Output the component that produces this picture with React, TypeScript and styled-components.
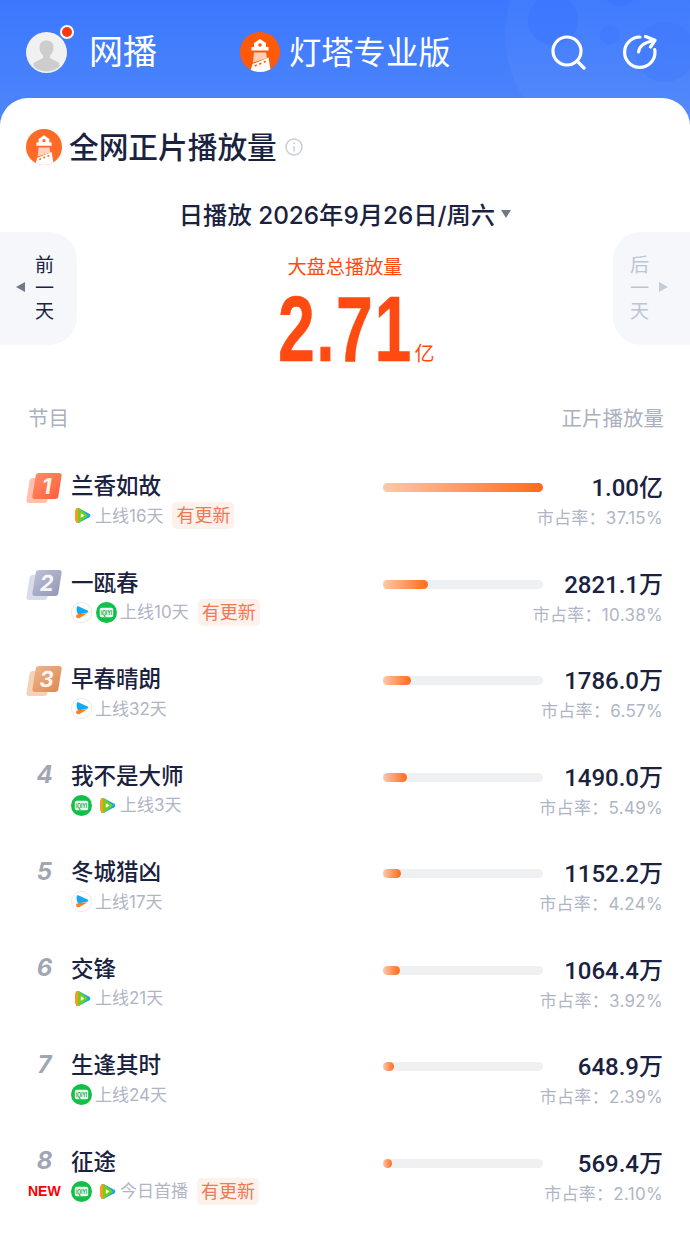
import React from "react";
import styled, { createGlobalStyle } from "styled-components";

type Source = "tencent" | "youku" | "iqiyi";

interface ShowRow {
  title: string;
  sources: Source[];
  online: string;
  updated?: boolean;
  isNew?: boolean;
  bar: number;
  amount: string;
  share: string;
}

const rows: ShowRow[] = [
  { title: "兰香如故", sources: ["tencent"], online: "上线16天", updated: true, bar: 160, amount: "1.00亿", share: "37.15%" },
  { title: "一瓯春", sources: ["youku", "iqiyi"], online: "上线10天", updated: true, bar: 45, amount: "2821.1万", share: "10.38%" },
  { title: "早春晴朗", sources: ["youku"], online: "上线32天", bar: 28, amount: "1786.0万", share: "6.57%" },
  { title: "我不是大师", sources: ["iqiyi", "tencent"], online: "上线3天", bar: 24, amount: "1490.0万", share: "5.49%" },
  { title: "冬城猎凶", sources: ["youku"], online: "上线17天", bar: 18, amount: "1152.2万", share: "4.24%" },
  { title: "交锋", sources: ["tencent"], online: "上线21天", bar: 17, amount: "1064.4万", share: "3.92%" },
  { title: "生逢其时", sources: ["iqiyi"], online: "上线24天", bar: 11, amount: "648.9万", share: "2.39%" },
  { title: "征途", sources: ["iqiyi", "tencent"], online: "今日首播", updated: true, isNew: true, bar: 9, amount: "569.4万", share: "2.10%" },
];

const medals = [
  { back: "#ffc0ad", front: "linear-gradient(135deg, #ff8d66, #ff5f3c)" },
  { back: "#d9dcea", front: "linear-gradient(135deg, #bcc0d6, #9398b8)" },
  { back: "#f3d2b8", front: "linear-gradient(135deg, #eeb388, #dd8a55)" },
];

const LighthouseLogo = ({ size, bg }: { size: number; bg: string }) => (
  <svg width={size} height={size} viewBox="0 0 40 40" style={{ flexShrink: 0 }}>
    <defs>
      <clipPath id={`lh${size}`}>
        <circle cx="20" cy="20" r="20" />
      </clipPath>
    </defs>
    <circle cx="20" cy="20" r="20" fill={bg} />
    <g clipPath={`url(#lh${size})`} fill="#fff">
      <path d="M20 7l6 4v4h2.500v3.500h-17V15H14v-4z" />
      <circle cx="20" cy="13" r="1.800" fill={bg} />
      <path d="M14 20.500h12l1 5.500-14 4.500z" opacity=".7" />
      <path d="M12.500 32l16-6.500 2.500 15H10z" />
      <path d="M14.500 33l2-.8.5 1.700-2 .8zM19 31.200l2-.8.5 1.700-2 .8zM23.500 29.400l2-.8.5 1.700-2 .8z" fill={bg} />
    </g>
  </svg>
);

const TencentIcon = () => (
  <svg width="21" height="21" viewBox="0 0 21 21">
    <path d="M5 5c0-2 1.500-2.500 3-1.700l10.300 5.500c1.400.8 1.400 2.600 0 3.400L8 17.700C6.500 18.500 5 18 5 16z" fill="#14a6f2" />
    <path d="M5 5c0-2 1.500-2.500 3-1.700l7.800 6c1 .8 1 1.600 0 2.400L8 17.700C6.500 18.500 5 18 5 16z" fill="#6fcf1c" />
    <path d="M7.500 3.100C5.500 3.300 4 4.500 4 6.500v8c0 2 1.500 3.200 3.500 3.400-.8-4.800-.8-10 0-14.800z" fill="#ff9a1f" />
    <path d="M9.800 8.200l3.700 2.300-3.700 2.300z" fill="#fff" />
  </svg>
);

const YoukuIcon = () => (
  <svg width="21" height="21" viewBox="0 0 21 21">
    <circle cx="10.500" cy="10.500" r="10.100" fill="#fff" stroke="#dfe3e6" strokeWidth=".8" />
    <path d="M6 4.500c.5-.4 1.200-.3 1.800 0l8.800 4c1 .5 1 1.400.1 1.900L7.500 12.400C5.800 11 5 7 6 4.500z" fill="#18a7f2" />
    <path d="M16.700 11.200l-8.200 4.700c-1.600.8-3.400 0-3.400-1.500 0-1.600 1.400-2.300 3-2.400z" fill="#ff7d1e" />
  </svg>
);

const IqiyiIcon = () => (
  <svg width="21" height="21" viewBox="0 0 21 21">
    <circle cx="10.500" cy="10.500" r="10.500" fill="#10c048" />
    <rect x="3.800" y="5.800" width="13.400" height="9.400" rx="1.800" fill="#e9fbef" />
    <text x="10.500" y="13" textAnchor="middle" fontFamily="Liberation Sans, sans-serif" fontWeight="700" fontSize="6.500" textLength="11" lengthAdjust="spacingAndGlyphs" fill="#10a53f">
      iQIYI
    </text>
  </svg>
);

const sourceIcons: Record<Source, React.ReactNode> = {
  tencent: <TencentIcon />,
  youku: <YoukuIcon />,
  iqiyi: <IqiyiIcon />,
};

export default function App() {
  return (
    <Page>
      <GlobalStyle />
      <Header>
        <Bubble $size={230} $top={-80} $right={-45} $fill="rgba(255, 255, 255, 0.035)" />
        <Bubble $size={50} $top={-5} $right={112} $fill="rgba(52, 112, 255, 0.4)" />
        <Bubble $size={36} $top={-30} $right={52} $fill="rgba(52, 112, 255, 0.4)" />
        <Bubble $size={20} $top={25} $right={70} $fill="rgba(52, 112, 255, 0.2)" />
        <Bubble $size={60} $top={22} $right={-5} $fill="rgba(52, 112, 255, 0.2)" />
        <UserGroup>
          <Avatar>
            <svg width="41" height="41" viewBox="0 0 41 41">
              <defs>
                <clipPath id="avatarClip">
                  <circle cx="20.500" cy="20.500" r="19" />
                </clipPath>
              </defs>
              <circle cx="20.500" cy="20.500" r="20.500" fill="#f1f1f1" />
              <g clipPath="url(#avatarClip)" fill="#cdcdcd">
                <path d="M20.500 8.500c4.500 0 7 2.500 7 7 0 3.500-1.500 6.500-3.500 8v2.500l9.500 5v9H7.500v-9l9.500-5v-2.500c-2-1.500-3.500-4.500-3.500-8 0-4.500 2.500-7 7-7z" />
              </g>
            </svg>
            <RedDot />
          </Avatar>
          <Channel>网播</Channel>
        </UserGroup>
        <BrandGroup>
          <LighthouseLogo size={40} bg="#ff5a0a" />
          <Brand>灯塔专业版</Brand>
        </BrandGroup>
        <Actions>
          <svg width="35" height="35" viewBox="0 0 35 35" fill="none" stroke="#fff" strokeWidth="3.200" strokeLinecap="round">
            <circle cx="16" cy="16" r="14" />
            <path d="M26.500 26.500l6.500 6.500" />
          </svg>
          <svg width="35" height="35" viewBox="0 0 35 35" fill="none" stroke="#fff" strokeWidth="3.200" strokeLinecap="round" strokeLinejoin="round">
            <path d="M17 2A15.200 15.200 0 1 0 32 17.500c0-1-.1-2-.3-3" />
            <path d="M15.500 17c.8-5 5-9.500 14-11" />
            <path d="M22.500 1.500l9.500 3.800-4.500 6.700" />
          </svg>
        </Actions>
      </Header>

      <Card>
        <TitleRow>
          <LighthouseLogo size={36} bg="#ff6a26" />
          <PageTitle>全网正片播放量</PageTitle>
          <svg width="18" height="18" viewBox="0 0 18 18" fill="none" stroke="#c6cfdb" strokeWidth="1.500">
            <circle cx="9" cy="9" r="8" />
            <path d="M9 8v5.500M9 4.500v1.500" />
          </svg>
        </TitleRow>

        <DateRow>
          日播放 2026年9月26日/周六
          <DateCaret />
        </DateRow>

        <Hero>
          <DayButton $side="left">
            <Caret $side="left" />
            <DayLabel>
              <span>前</span>
              <span>一</span>
              <span>天</span>
            </DayLabel>
          </DayButton>
          <Total>
            <TotalLabel>大盘总播放量</TotalLabel>
            <TotalValue>
              <BigNumber>2.71</BigNumber>
              <BigUnit>亿</BigUnit>
            </TotalValue>
          </Total>
          <DayButton $side="right" $disabled>
            <DayLabel>
              <span>后</span>
              <span>一</span>
              <span>天</span>
            </DayLabel>
            <Caret $side="right" />
          </DayButton>
        </Hero>

        <ColumnHead>
          <span>节目</span>
          <span>正片播放量</span>
        </ColumnHead>

        <List>
          {rows.map((row, i) => (
            <Row key={row.title}>
              <Rank>
                {i < 3 ? (
                  <Medal>
                    <MedalBack style={{ background: medals[i].back }} />
                    <MedalFront style={{ background: medals[i].front }}>
                      <MedalNum>{i + 1}</MedalNum>
                    </MedalFront>
                  </Medal>
                ) : (
                  <PlainRank>{i + 1}</PlainRank>
                )}
              </Rank>
              <Info>
                <ShowTitle>{row.title}</ShowTitle>
                <Meta>
                  {row.isNew && <NewMark>NEW</NewMark>}
                  <Sources>
                    {row.sources.map((s) => (
                      <SourceIcon key={s}>{sourceIcons[s]}</SourceIcon>
                    ))}
                  </Sources>
                  <Online>{row.online}</Online>
                  {row.updated && <UpdateTag>有更新</UpdateTag>}
                </Meta>
              </Info>
              <Track>
                <Fill style={{ width: row.bar }} />
              </Track>
              <Stats>
                <Amount>{row.amount}</Amount>
                <Share>
                  市占率：<ShareValue>{row.share}</ShareValue>
                </Share>
              </Stats>
            </Row>
          ))}
        </List>
      </Card>
    </Page>
  );
}

const GlobalStyle = createGlobalStyle`
  html, body {
    margin: 0;
    padding: 0;
    background: #fff;
  }
  * {
    box-sizing: border-box;
  }
  body {
    font-family: Inter, "Noto Sans CJK SC", sans-serif;
  }
`;

const Page = styled.div`
  width: 690px;
  height: 1235px;
  overflow: hidden;
  background: #fff;
`;

const Header = styled.header`
  position: relative;
  height: 128px;
  padding: 0 32px 24px 26px;
  display: grid;
  grid-template-columns: 214px 1fr auto;
  align-items: center;
  overflow: hidden;
  background: linear-gradient(180deg, #3b78ff 0%, #4f86f8 100%);
`;

const Bubble = styled.div<{ $size: number; $top: number; $right: number; $fill: string }>`
  position: absolute;
  top: ${({ $top }) => $top}px;
  right: ${({ $right }) => $right}px;
  width: ${({ $size }) => $size}px;
  height: ${({ $size }) => $size}px;
  border-radius: 50%;
  background: ${({ $fill }) => $fill};
`;

const UserGroup = styled.div`
  position: relative;
  display: flex;
  align-items: center;
  gap: 22px;
`;

const Avatar = styled.div`
  position: relative;
  width: 41px;
  height: 41px;
  display: flex;
`;

const RedDot = styled.span`
  position: absolute;
  top: -7px;
  right: -7px;
  width: 14px;
  height: 14px;
  border-radius: 50%;
  background: #fa3a0c;
  border: 2.500px solid #fff;
`;

const Channel = styled.div`
  margin-bottom: 5px;
  font-family: "Noto Sans CJK SC", sans-serif;
  font-size: 34px;
  line-height: 44px;
  color: #fff;
`;

const BrandGroup = styled.div`
  position: relative;
  display: flex;
  align-items: center;
  gap: 9px;
`;

const Brand = styled.div`
  margin-bottom: 5px;
  font-family: "Noto Sans CJK SC", sans-serif;
  font-size: 32.300px;
  line-height: 42px;
  color: #fff;
`;

const Actions = styled.div`
  position: relative;
  display: flex;
  gap: 37px;
`;

const Card = styled.main`
  position: relative;
  margin-top: -30px;
  height: 1137px;
  padding-top: 29px;
  background: #fff;
  border-radius: 28px 28px 0 0;
`;

const TitleRow = styled.div`
  display: flex;
  align-items: center;
  padding-left: 26px;
  height: 40px;
`;

const PageTitle = styled.h1`
  margin: 0 8px 2px 7px;
  font-family: "Noto Sans CJK SC", sans-serif;
  font-size: 29.700px;
  line-height: 40px;
  font-weight: 500;
  color: #1a2240;
`;

const DateRow = styled.div`
  margin-top: 28px;
  display: flex;
  align-items: center;
  justify-content: center;
  height: 36px;
  font-size: 24.300px;
  font-weight: 500;
  color: #1a2240;
`;

const DateCaret = styled.span`
  margin: 2px 0 0 6px;
  border-left: 5px solid transparent;
  border-right: 5px solid transparent;
  border-top: 8px solid #6e7a8c;
`;

const Hero = styled.section`
  margin-top: 1px;
  display: flex;
  justify-content: space-between;
  align-items: flex-start;
  height: 170px;
`;

const DayButton = styled.div<{ $side: "left" | "right"; $disabled?: boolean }>`
  width: 77px;
  height: 113px;
  display: flex;
  align-items: center;
  gap: 10px;
  background: #f5f7fa;
  color: ${({ $disabled }) => ($disabled ? "#bcc4d2" : "#1a2240")};
  padding: 0 0 4px ${({ $side }) => ($side === "left" ? "16px" : "17px")};
  border-radius: ${({ $side }) => ($side === "left" ? "0 28px 28px 0" : "28px 0 0 28px")};
`;

const Caret = styled.span<{ $side: "left" | "right" }>`
  border-top: 5px solid transparent;
  border-bottom: 5px solid transparent;
  ${({ $side }) =>
    $side === "left"
      ? "border-right: 9px solid #6e7a8c;"
      : "border-left: 9px solid #c4ccd8;"}
`;

const DayLabel = styled.div`
  display: flex;
  flex-direction: column;
  font-family: "Noto Sans CJK SC", sans-serif;
  font-size: 19px;
  line-height: 23px;
`;

const Total = styled.div`
  display: flex;
  flex-direction: column;
  align-items: center;
`;

const TotalLabel = styled.div`
  margin-top: 20px;
  font-family: "Noto Sans CJK SC", sans-serif;
  font-size: 19.200px;
  line-height: 28px;
  color: #ff4a12;
`;

const TotalValue = styled.div`
  display: flex;
  align-items: flex-end;
  height: 72px;
  margin: 13px 0 0 22px;
`;

const BigNumber = styled.span`
  display: block;
  width: 134px;
  white-space: nowrap;
  transform: scaleX(0.72);
  transform-origin: left center;
  -webkit-text-stroke: 0.6px #ff4a12;
  font-family: "Liberation Sans", sans-serif;
  font-weight: 700;
  font-size: 92px;
  letter-spacing: 2px;
  line-height: 72px;
  color: #ff4a12;
`;

const BigUnit = styled.span`
  font-family: "Noto Sans CJK SC", sans-serif;
  font-size: 20px;
  line-height: 24px;
  color: #ff4a12;
  margin-left: 3px;
`;

const ColumnHead = styled.div`
  display: flex;
  justify-content: space-between;
  padding: 0 26px 0 28px;
  height: 30px;
  font-family: "Noto Sans CJK SC", sans-serif;
  font-size: 20.500px;
  line-height: 30px;
  color: #aab0c0;
`;

const List = styled.div`
  margin-top: 36px;
  display: flex;
  flex-direction: column;
`;

const Row = styled.div`
  height: 96.500px;
  padding: 0 27px 0 28px;
  display: grid;
  grid-template-columns: 43px 312px 160px 120px;
  align-items: start;
`;

const Rank = styled.div`
  height: 34px;
  display: flex;
  align-items: center;
`;

const Medal = styled.div`
  position: relative;
  width: 34px;
  height: 30px;
  margin-top: 6px;
`;

const MedalBack = styled.span`
  position: absolute;
  left: 0;
  top: 5px;
  width: 21px;
  height: 25px;
  border-radius: 3px;
  transform: skewX(-9deg);
`;

const MedalFront = styled.span`
  position: absolute;
  left: 6px;
  top: 0;
  width: 26px;
  height: 26px;
  border-radius: 3px;
  transform: skewX(-9deg);
  display: flex;
  align-items: center;
  justify-content: center;
`;

const MedalNum = styled.span`
  font-family: Inter, sans-serif;
  font-weight: 700;
  font-size: 22px;
  line-height: 26px;
  color: rgba(255, 255, 255, 0.92);
`;

const PlainRank = styled.span`
  width: 33px;
  text-align: center;
  font-family: Inter, sans-serif;
  font-style: italic;
  font-weight: 700;
  font-size: 24px;
  color: #a1a6b5;
`;

const Info = styled.div`
  display: flex;
  flex-direction: column;
`;

const ShowTitle = styled.div`
  margin-top: -1px;
  font-family: "Noto Sans CJK SC", sans-serif;
  font-size: 22.500px;
  line-height: 34px;
  font-weight: 500;
  color: #1a2240;
`;

const Meta = styled.div`
  position: relative;
  display: flex;
  align-items: center;
  height: 27px;
  margin-top: 1px;
`;

const NewMark = styled.span`
  position: absolute;
  left: -43px;
  top: 5px;
  font-family: "Liberation Sans", sans-serif;
  font-weight: 700;
  font-size: 14px;
  line-height: 16px;
  color: #fe0000;
`;

const Sources = styled.div`
  display: flex;
  gap: 4px;
`;

const SourceIcon = styled.span`
  display: flex;
  width: 21px;
  height: 21px;
`;

const Online = styled.span`
  margin-left: 3px;
  font-family: Inter, "Noto Sans CJK SC", sans-serif;
  font-size: 17px;
  line-height: 24px;
  color: #b0b5c5;
`;

const UpdateTag = styled.span`
  margin-left: 9px;
  padding: 0 4px;
  height: 27px;
  border-radius: 5px;
  background: #fdf1ec;
  font-family: "Noto Sans CJK SC", sans-serif;
  font-size: 18px;
  line-height: 25px;
  color: #ec7a55;
`;

const Track = styled.div`
  margin-top: 15px;
  width: 160px;
  height: 9px;
  border-radius: 5px;
  background: #eef0f2;
  display: flex;
`;

const Fill = styled.div`
  height: 9px;
  border-radius: 5px;
  background: linear-gradient(90deg, #ffc7ab 0%, #ff6a1a 100%);
`;

const Stats = styled.div`
  width: 120px;
  display: flex;
  flex-direction: column;
  align-items: flex-end;
  white-space: nowrap;
`;

const Amount = styled.div`
  margin-top: 3px;
  font-family: Roboto, "Noto Sans CJK SC", sans-serif;
  font-size: 24px;
  line-height: 34px;
  font-weight: 500;
  color: #1a2240;
`;

const Share = styled.div`
  font-family: "Noto Sans CJK SC", sans-serif;
  font-size: 17px;
  letter-spacing: 0.3px;
  line-height: 27px;
  margin-top: -2px;
  color: #b0b5c5;
`;

const ShareValue = styled.span`
  font-family: Inter, sans-serif;
`;
